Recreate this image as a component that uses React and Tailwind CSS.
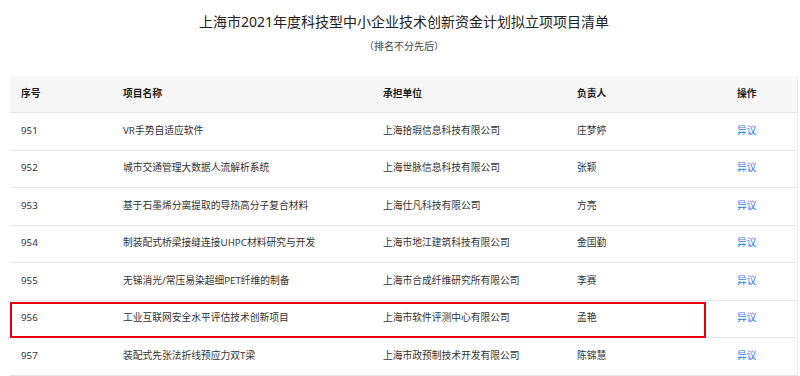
import React from "react";

const rows = [
  ["951", "VR手势自适应软件", "上海拾瑕信息科技有限公司", "庄梦婷"],
  ["952", "城市交通管理大数据人流解析系统", "上海世脉信息科技有限公司", "张颖"],
  ["953", "基于石墨烯分离提取的导热高分子复合材料", "上海仕凡科技有限公司", "方亮"],
  ["954", "制装配式桥梁接缝连接UHPC材料研究与开发", "上海市地江建筑科技有限公司", "金国勤"],
  ["955", "无锑消光/常压易染超细PET纤维的制备", "上海市合成纤维研究所有限公司", "李赛"],
  ["956", "工业互联网安全水平评估技术创新项目", "上海市软件评测中心有限公司", "孟艳"],
  ["957", "装配式先张法折线预应力双T梁", "上海市政预制技术开发有限公司", "陈锦慧"],
];

const cols = "grid grid-cols-[102px_260px_194px_160px_72px]";

export default function App() {
  return (
    <div
      className="w-[800px] h-[376px] overflow-hidden bg-white text-[#333]"
      style={{ fontFamily: '"Noto Sans", "Noto Sans CJK SC", sans-serif' }}
    >
      <div className="pt-[12px] flex flex-col items-center pl-[8px]">
        <div className="text-[14px] leading-[20px] text-[#222]">
          上海市2021年度科技型中小企业技术创新资金计划拟立项项目清单
        </div>
        <div className="mt-[6px] text-[10px] leading-[16px] text-[#444]">
          （排名不分先后）
        </div>
      </div>
      <div className="mt-[22px] ml-[10px] w-[788px] border-r border-[#ececec]">
        <div
          className={`${cols} h-[37px] bg-[#f7f7f7] border-b border-[#e4e4e4] items-center text-[9.75px] font-semibold text-[#1a1a1a]`}
        >
          <div className="pl-[11px]">序号</div>
          <div className="pl-[11px]">项目名称</div>
          <div className="pl-[11px]">承担单位</div>
          <div className="pl-[11px]">负责人</div>
          <div className="pl-[11px]">操作</div>
        </div>
        {rows.map((r) => (
          <div
            key={r[0]}
            className={`${cols} relative h-[37.5px] border-b border-[#e6e6e6] items-center text-[9.75px] text-[#333]`}
          >
            <div className="pl-[11px]">{r[0]}</div>
            <div className="pl-[11px] whitespace-nowrap">{r[1]}</div>
            <div className="pl-[11px] whitespace-nowrap">{r[2]}</div>
            <div className="pl-[11px]">{r[3]}</div>
            <div className="pl-[11px] text-[#2b7cf0]">异议</div>
            {r[0] === "956" && (
              <div className="absolute left-0 top-[1px] bottom-[-1px] w-[696px] border-[2.5px] border-[#e3000f]" />
            )}
          </div>
        ))}
      </div>
    </div>
  );
}
